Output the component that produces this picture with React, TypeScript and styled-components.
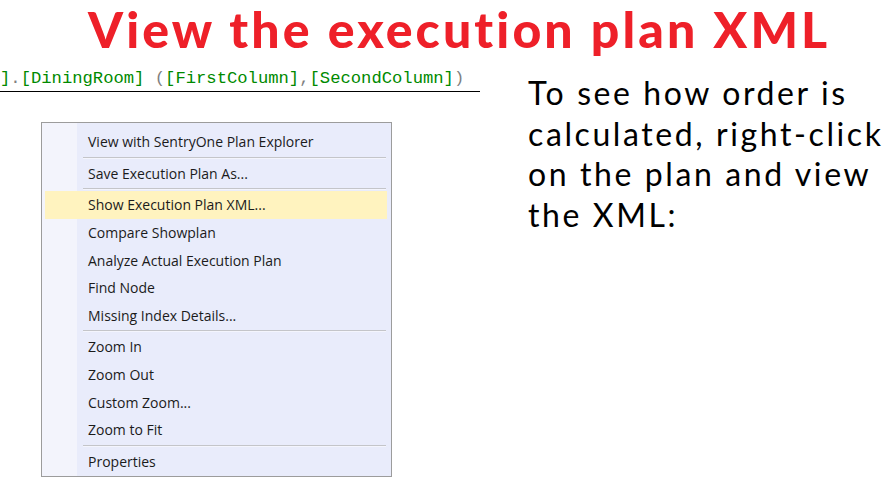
import React from "react";
import styled, { createGlobalStyle } from "styled-components";

const Global = createGlobalStyle`
  html, body { margin: 0; padding: 0; background: #ffffff; }
  body { width: 890px; height: 481px; overflow: hidden; }
`;

const Page = styled.div`
  width: 890px;
  height: 481px;
  display: flex;
  flex-direction: column;
  background: #ffffff;
`;

const Title = styled.h1`
  margin: 0;
  padding: 0 0 0 88px;
  height: 60px;
  font-family: Lato, "Noto Sans", sans-serif;
  font-weight: 900;
  font-size: 50px;
  line-height: 58px;
  color: #ee2029;
  letter-spacing: 3.1px;
  white-space: nowrap;
`;

const Body = styled.div`
  display: flex;
  align-items: flex-start;
`;

const LeftColumn = styled.div`
  width: 480px;
  display: flex;
  flex-direction: column;
`;

const CodeLine = styled.div`
  height: 32px;
  box-sizing: border-box;
  padding-top: 9px;
  border-bottom: 1px solid #000;
  font-family: "Liberation Mono", "Courier New", monospace;
  font-size: 17.2px;
  line-height: 20px;
  white-space: pre;
  color: #808080;
`;

const Ident = styled.span`
  color: #008a00;
`;

const Menu = styled.div`
  margin: 30px 0 0 41px;
  width: 351px;
  box-sizing: border-box;
  border: 1px solid #9c9c9c;
  padding: 5px 0 1px;
  background: linear-gradient(to right, #f3f4fc 0, #f3f4fc 35px, #e9ecfb 35px);
  font-family: "Open Sans", "Noto Sans", sans-serif;
  font-size: 14px;
  color: #1b1b1b;
`;

const Item = styled.div<{ $active?: boolean }>`
  height: 27.6px;
  margin: 0 4px 0 3px;
  padding-left: 43px;
  display: flex;
  align-items: center;
  background: ${(p) => (p.$active ? "#fff3bf" : "transparent")};
`;

const Separator = styled.div`
  height: 1px;
  margin: 1px 5px 1px 41px;
  background: #c4c5c9;
  border-bottom: 1px solid #f4f5fd;
`;

const Paragraph = styled.p`
  margin: 13px 0 0 48px;
  font-family: Lato, "Noto Sans", sans-serif;
  font-size: 32px;
  line-height: 40.5px;
  letter-spacing: 2.6px;
  color: #000;
`;

type Entry = { label: string; active?: boolean } | "sep";

const entries: Entry[] = [
  { label: "View with SentryOne Plan Explorer" },
  "sep",
  { label: "Save Execution Plan As..." },
  "sep",
  { label: "Show Execution Plan XML...", active: true },
  { label: "Compare Showplan" },
  { label: "Analyze Actual Execution Plan" },
  { label: "Find Node" },
  { label: "Missing Index Details..." },
  "sep",
  { label: "Zoom In" },
  { label: "Zoom Out" },
  { label: "Custom Zoom..." },
  { label: "Zoom to Fit" },
  "sep",
  { label: "Properties" },
];

export default function App() {
  return (
    <>
      <Global />
      <Page>
        <Title>View the execution plan XML</Title>
        <Body>
          <LeftColumn>
            <CodeLine>
              <Ident>]</Ident>.<Ident>[DiningRoom]</Ident> (<Ident>[FirstColumn]</Ident>,
              <Ident>[SecondColumn]</Ident>)
            </CodeLine>
            <Menu>
              {entries.map((e, i) =>
                e === "sep" ? (
                  <Separator key={i} />
                ) : (
                  <Item key={i} $active={e.active}>
                    {e.label}
                  </Item>
                )
              )}
            </Menu>
          </LeftColumn>
          <Paragraph>
            To see how order is
            <br />
            calculated, right-click
            <br />
            on the plan and view
            <br />
            the XML:
          </Paragraph>
        </Body>
      </Page>
    </>
  );
}
